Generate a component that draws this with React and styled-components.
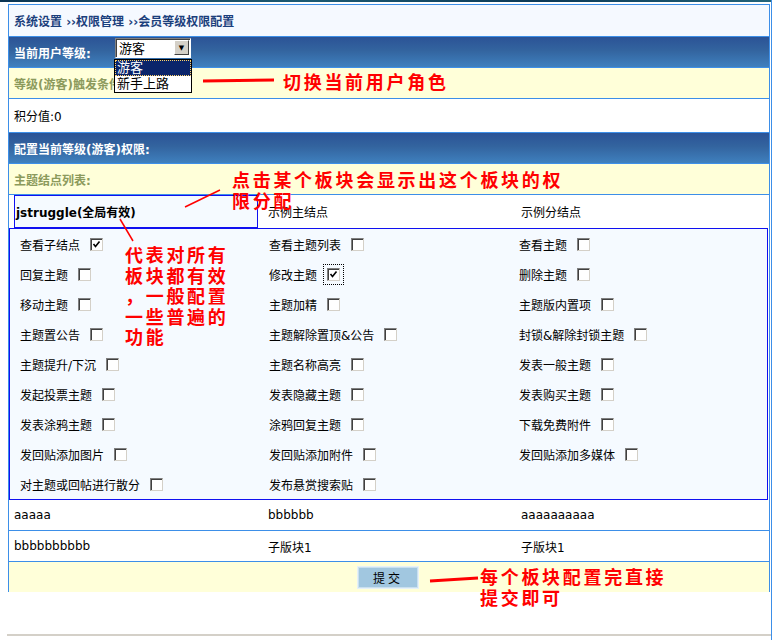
import React from 'react';
import styled, { createGlobalStyle } from 'styled-components';

const GlobalStyle = createGlobalStyle`
  html, body {
    margin: 0;
    padding: 0;
    background: #ffffff;
  }
  body {
    font-family: "DejaVu Sans", "Noto Sans CJK SC", sans-serif;
    font-size: 12px;
    color: #000;
  }
`;

const LINE = '#3d8fe8';

const Page = styled.div`
  position: relative;
  width: 771px;
  height: 640px;
  border-right: 1px solid ${LINE};
  overflow: hidden;
`;

const TopStrip = styled.div`
  height: 2px;
  background: linear-gradient(90deg, #0b3553, #1d5b73 40%, #0d3a57 70%, #22647a);
`;

const Frame = styled.div`
  width: 760px;
  margin: 2px 0 0 8px;
  border: 1px solid ${LINE};
  border-bottom: none;
`;

const Row = styled.div`
  display: flex;
  align-items: center;
  height: ${(p) => p.$h || 30}px;
  padding-left: 5px;
  border-bottom: ${(p) => (p.$noLine ? 'none' : `1px solid ${LINE}`)};
  background: ${(p) =>
    p.$kind === 'crumb'
      ? '#f5f9ff'
      : p.$kind === 'head'
      ? 'linear-gradient(180deg, #2b5396 0%, #33649f 45%, #3f80be 100%)'
      : p.$kind === 'note'
      ? '#ffffd9'
      : '#ffffff'};
  color: ${(p) =>
    p.$kind === 'crumb' ? '#1b3f7c' : p.$kind === 'head' ? '#ffffff' : p.$kind === 'note' ? '#8c9a5c' : '#000'};
  font-weight: ${(p) => (p.$kind && p.$kind !== 'plain' ? 700 : 400)};
  position: relative;
`;

const HeadLabel = styled.span`
  width: 101px;
`;

const SelectWrap = styled.div`
  position: relative;
  width: 74px;
  height: 18px;
  margin-top: -9px;
  border: 1px solid;
  border-color: #808080 #ffffff #ffffff #808080;
  box-shadow: inset 1px 1px 0 #404040;
  background: #fff;
  display: flex;
  align-items: center;
  font-weight: 400;
  color: #000;
`;

const SelectText = styled.span`
  flex: 1;
  padding-left: 3px;
  font-size: 13px;
`;

const SelectBtn = styled.span`
  width: 15px;
  height: 15px;
  margin-right: 1px;
  background: #d4d0c8;
  border: 1px solid;
  border-color: #ffffff #404040 #404040 #ffffff;
  box-sizing: border-box;
  display: flex;
  align-items: center;
  justify-content: center;
  font-size: 7px;
`;

const DropList = styled.div`
  position: absolute;
  top: 20px;
  left: -2px;
  width: 76px;
  border: 1px solid #000;
  background: #fff;
  z-index: 3;
`;

const DropItem = styled.div`
  height: 16px;
  line-height: 16px;
  padding-left: 2px;
  font-size: 13px;
  background: ${(p) => (p.$active ? '#0a246a' : '#fff')};
  color: ${(p) => (p.$active ? '#fff' : '#000')};
  outline: ${(p) => (p.$active ? '1px dotted #ffd46a' : 'none')};
  outline-offset: -1px;
`;

const Grid = styled.div`
  display: grid;
  grid-template-columns: 253px 253px 1fr;
  height: ${(p) => p.$h || 30}px;
  border-bottom: ${(p) => (p.$noLine ? 'none' : `1px solid ${LINE}`)};
  background: #fff;
`;

const Cell = styled.div`
  display: flex;
  align-items: center;
  padding-left: ${(p) => (p.$pad != null ? p.$pad : 5)}px;
`;

const NodeBox = styled.div`
  width: 241px;
  height: 31px;
  border: 1px solid #1010f0;
  background: #f5faff;
  display: flex;
  align-items: center;
  padding-left: 1px;
  font-weight: 700;
  font-size: 12px;
`;

const PermBox = styled.div`
  margin-right: 1px;
  height: 270px;
  border: 1px solid #1010f0;
  background: #f5faff;
  display: grid;
  grid-template-columns: 249px 250px 1fr;
  grid-auto-rows: 30px;
`;

const Perm = styled.label`
  display: flex;
  align-items: center;
  gap: 10px;
  padding-left: 10px;
  white-space: nowrap;
`;

const Box = styled.span`
  position: relative;
  width: 13px;
  height: 13px;
  box-sizing: border-box;
  background: #fff;
  border: 1px solid;
  border-color: #808080 #d4d0c8 #d4d0c8 #808080;
  box-shadow: inset 1px 1px 0 #404040;
  display: inline-flex;
  align-items: center;
  justify-content: center;
  outline: ${(p) => (p.$focus ? '1px dotted #000' : 'none')};
  outline-offset: 3px;
`;

const Yellow = styled.div`
  height: 30px;
  background: #ffffd9;
  display: flex;
  align-items: center;
  justify-content: center;
`;

const Submit = styled.button`
  width: 60px;
  height: 21px;
  margin-left: -2px;
  background: #a1c7e0;
  border: 1px solid #c9e0ef;
  box-shadow: 0 0 0 1px #e6f1f8;
  font-family: "Noto Sans CJK SC", sans-serif;
  font-size: 12px;
  letter-spacing: 3px;
  padding: 0;
  color: #000;
`;

const BottomRule = styled.div`
  position: absolute;
  left: 7px;
  right: 0;
  top: 634px;
  height: 2px;
  background: #d4d0c8;
`;

const Note = styled.div`
  position: absolute;
  left: ${(p) => p.$x}px;
  top: ${(p) => p.$y}px;
  color: #ff0000;
  font-family: "Noto Sans CJK SC", sans-serif;
  font-size: 18px;
  font-weight: 700;
  letter-spacing: 2.7px;
  line-height: 20.5px;
  white-space: nowrap;
  z-index: 4;
`;

const Marks = styled.svg`
  position: absolute;
  left: 0;
  top: 0;
  z-index: 4;
  pointer-events: none;
`;

const Check = () => (
  <svg width="9" height="9" viewBox="0 0 9 9">
    <path d="M1.5 4 L3.5 6.5 L7.5 1.5" stroke="#000" strokeWidth="1.6" fill="none" />
  </svg>
);

const Checkbox = ({ checked, focus }) => (
  <Box $focus={focus}>{checked && <Check />}</Box>
);

const perms = [
  ['查看子结点', true], ['查看主题列表'], ['查看主题'],
  ['回复主题'], ['修改主题', true, true], ['删除主题'],
  ['移动主题'], ['主题加精'], ['主题版内置项'],
  ['主题置公告'], ['主题解除置顶&公告'], ['封锁&解除封锁主题'],
  ['主题提升/下沉'], ['主题名称高亮'], ['发表一般主题'],
  ['发起投票主题'], ['发表隐藏主题'], ['发表购买主题'],
  ['发表涂鸦主题'], ['涂鸦回复主题'], ['下载免费附件'],
  ['发回贴添加图片'], ['发回贴添加附件'], ['发回贴添加多媒体'],
  ['对主题或回帖进行散分'], ['发布悬赏搜索贴'], null,
];

export default function App() {
  return (
    <Page>
      <GlobalStyle />
      <TopStrip />
      <Frame>
        <Row $kind="crumb" $h={31}>系统设置 ››权限管理 ››会员等级权限配置</Row>
        <Row $kind="head" $h={30}>
          <HeadLabel>当前用户等级:</HeadLabel>
          <SelectWrap>
            <SelectText>游客</SelectText>
            <SelectBtn>▼</SelectBtn>
            <DropList>
              <DropItem $active>游客</DropItem>
              <DropItem>新手上路</DropItem>
            </DropList>
          </SelectWrap>
        </Row>
        <Row $kind="note" $h={30}>等级(游客)触发条件:</Row>
        <Row $kind="plain" $h={33}>积分值:0</Row>
        <Row $kind="head" $h={30}>配置当前等级(游客)权限:</Row>
        <Row $kind="note" $h={30}>主题结点列表:</Row>
        <Grid $h={33} $noLine>
          <Cell>
            <NodeBox>jstruggle(全局有效)</NodeBox>
          </Cell>
          <Cell $pad={6}>示例主结点</Cell>
          <Cell $pad={6}>示例分结点</Cell>
        </Grid>
        <PermBox>
          {perms.map((p, i) =>
            p ? (
              <Perm key={i}>
                {p[0]}
                <Checkbox checked={p[1]} focus={p[2]} />
              </Perm>
            ) : (
              <span key={i} />
            )
          )}
        </PermBox>
        <Grid>
          <Cell>aaaaa</Cell>
          <Cell $pad={6}>bbbbbb</Cell>
          <Cell $pad={6}>aaaaaaaaaa</Cell>
        </Grid>
        <Grid>
          <Cell>bbbbbbbbbb</Cell>
          <Cell $pad={6}>子版块1</Cell>
          <Cell $pad={6}>子版块1</Cell>
        </Grid>
        <Yellow>
          <Submit>提交</Submit>
        </Yellow>
      </Frame>
      <BottomRule />

      <Marks width="773" height="640">
        <line x1="203" y1="81" x2="274" y2="80" stroke="#ff0000" strokeWidth="3" />
        <line x1="185" y1="207" x2="220" y2="190" stroke="#ff0000" strokeWidth="1.5" />
        <line x1="120" y1="219" x2="133" y2="241" stroke="#ff0000" strokeWidth="1.5" />
        <line x1="430" y1="581" x2="478" y2="578" stroke="#ff0000" strokeWidth="3" />
      </Marks>
      <Note $x={283} $y={71}>切换当前用户角色</Note>
      <Note $x={232} $y={169}>
        点击某个板块会显示出这个板块的权
        <br />
        限分配
      </Note>
      <Note $x={125} $y={244}>
        代表对所有
        <br />
        板块都有效
        <br />
        ，一般配置
        <br />
        一些普遍的
        <br />
        功能
      </Note>
      <Note $x={480} $y={566}>
        每个板块配置完直接
        <br />
        提交即可
      </Note>
    </Page>
  );
}
